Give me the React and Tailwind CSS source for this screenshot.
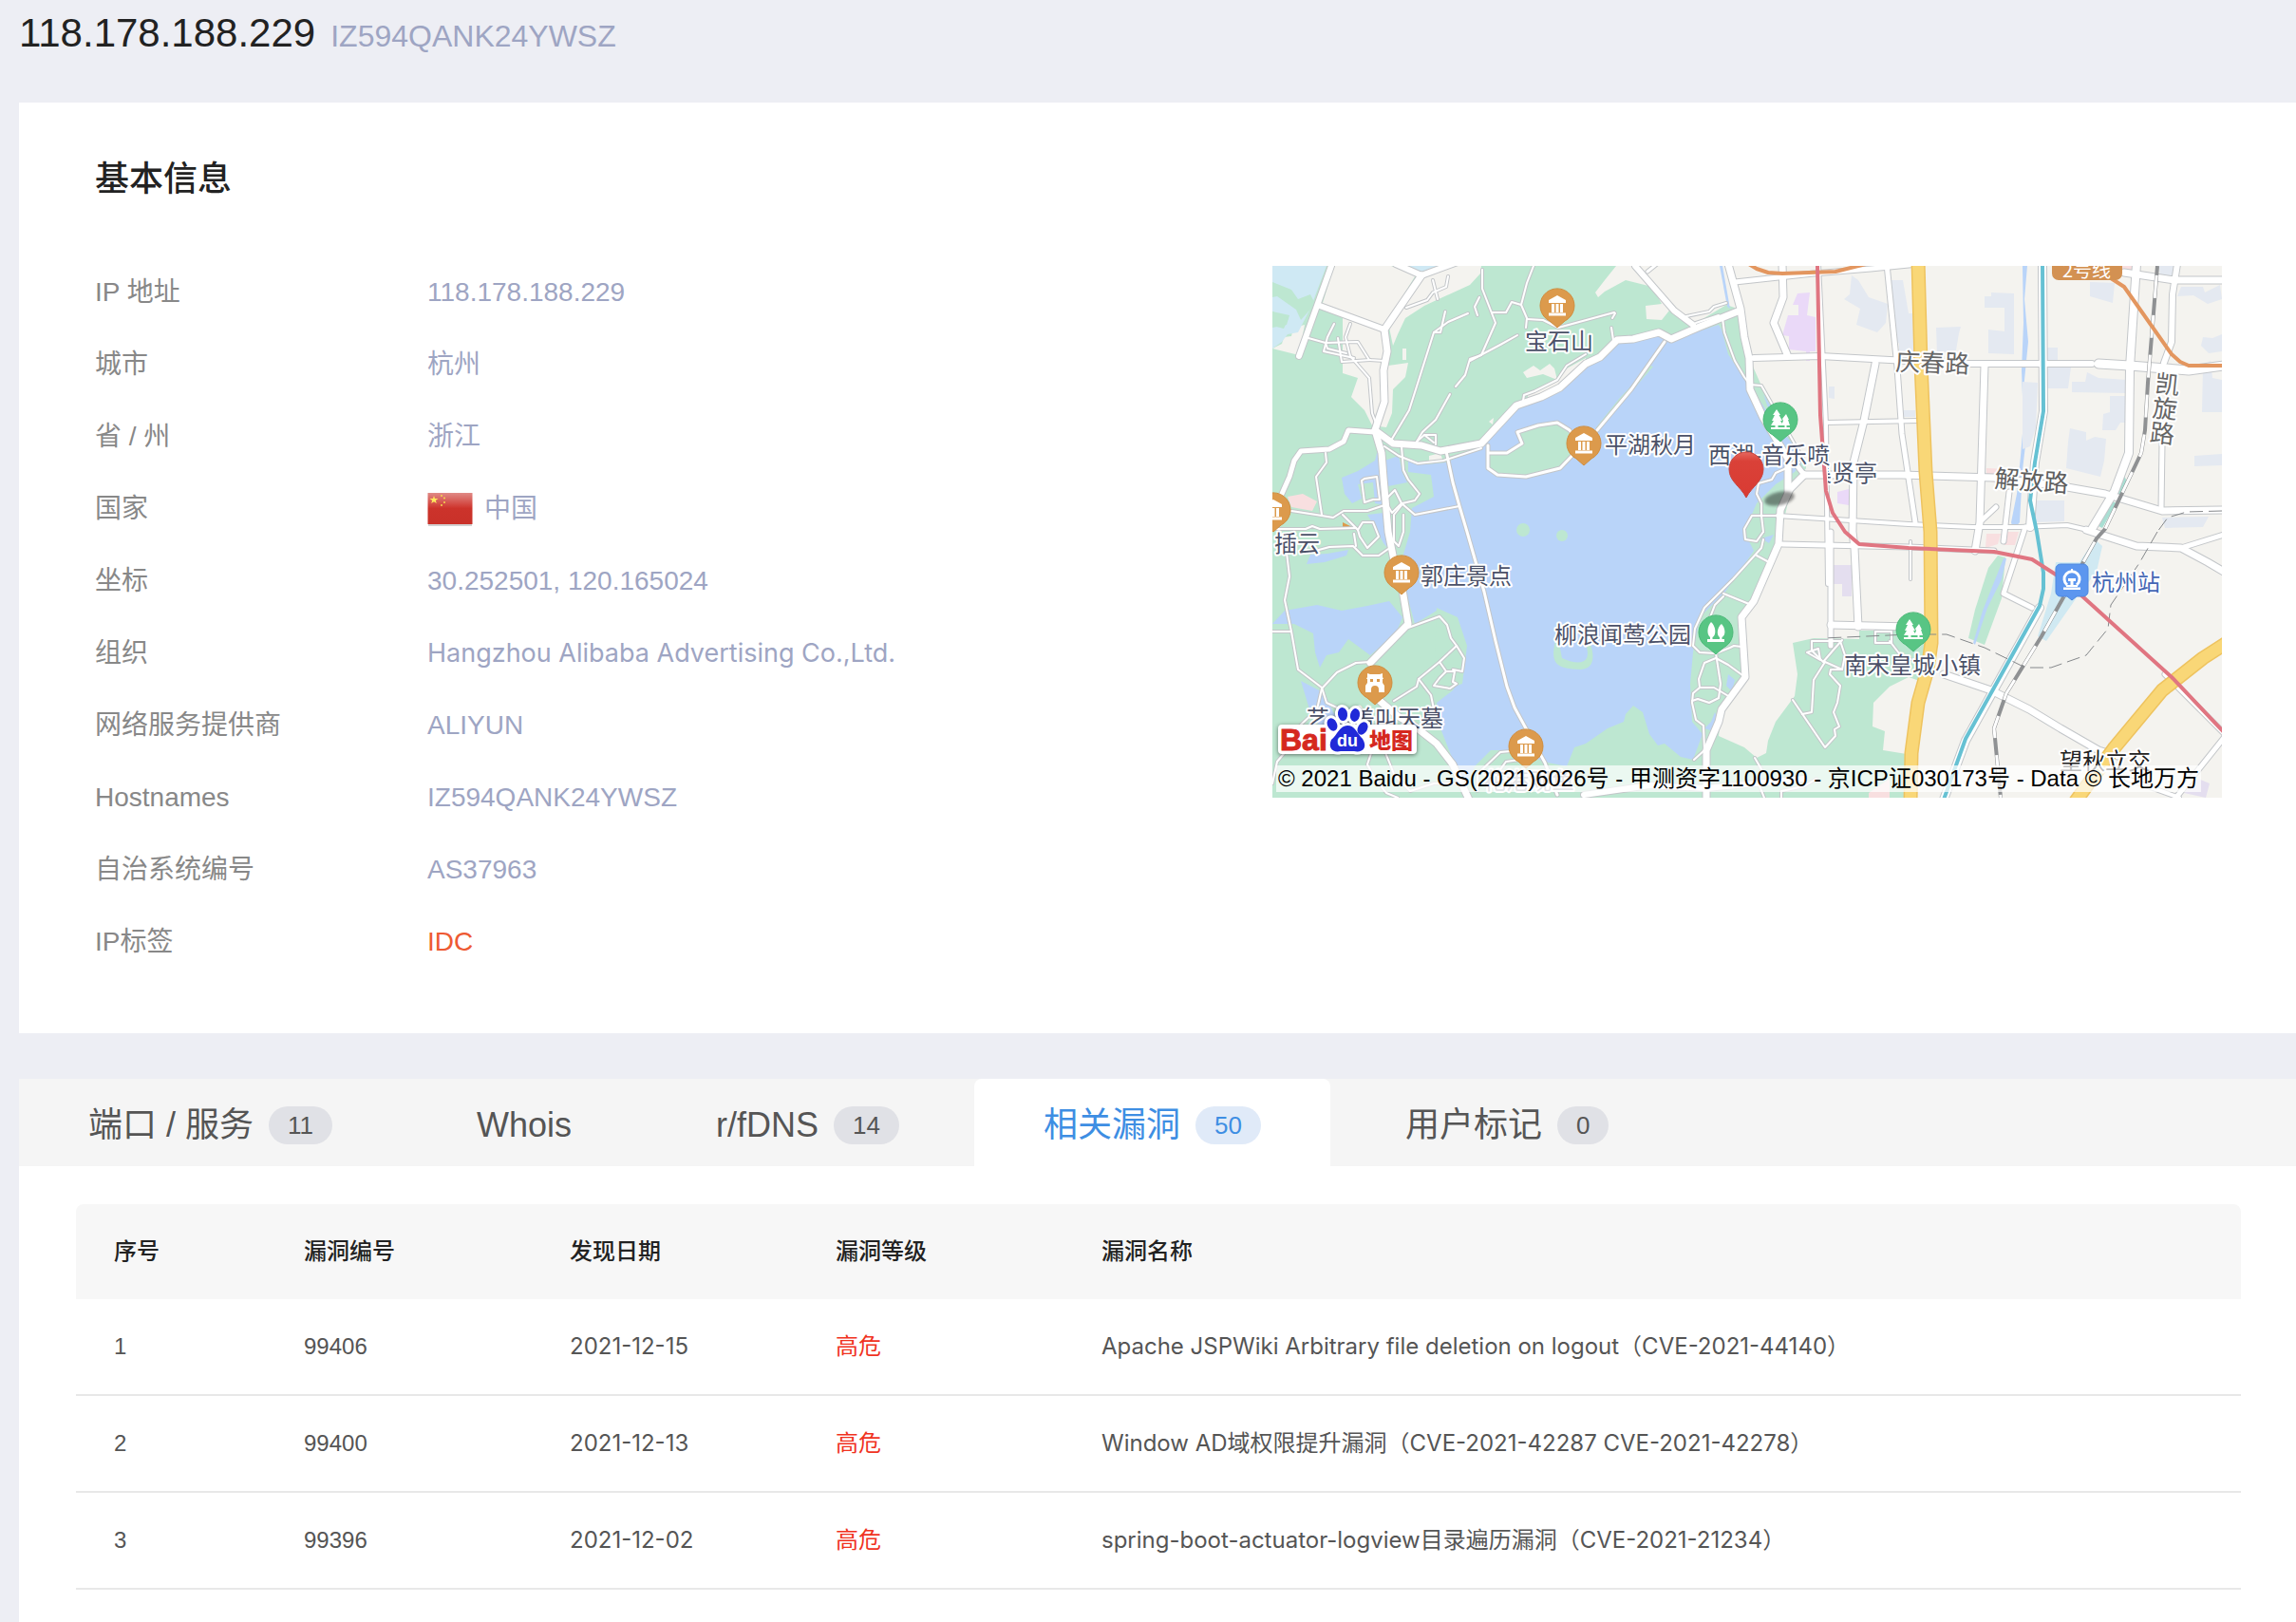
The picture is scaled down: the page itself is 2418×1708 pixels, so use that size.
import React from "react";

const INFO = [
  ["IP 地址", "118.178.188.229"],
  ["城市", "杭州"],
  ["省 / 州", "浙江"],
  ["国家", "中国", "flag"],
  ["坐标", "30.252501, 120.165024"],
  ["组织", "Hangzhou Alibaba Advertising Co.,Ltd.", "name"],
  ["网络服务提供商", "ALIYUN"],
  ["Hostnames", "IZ594QANK24YWSZ"],
  ["自治系统编号", "AS37963"],
  ["IP标签", "IDC", "tag"],
];

const VALUE_STYLE = {
  text: "text-[#9ea5c3]",
  flag: "flex items-center gap-3 text-[#9ea5c3]",
  name: "font-['Inter',sans-serif] text-[27px] text-[#9ea5c3]",
  tag: "text-[#ee5a33]",
};

const TABS = [
  { name: "端口 / 服务", count: 11 },
  { name: "Whois" },
  { name: "r/fDNS", count: 14 },
  { name: "相关漏洞", count: 50, active: true },
  { name: "用户标记", count: 0 },
];

const ROWS = [
  [1, "99406", "2021-12-15", "高危", "Apache JSPWiki Arbitrary file deletion on logout（CVE-2021-44140）"],
  [2, "99400", "2021-12-13", "高危", "Window AD域权限提升漏洞（CVE-2021-42287 CVE-2021-42278）"],
  [3, "99396", "2021-12-02", "高危", "spring-boot-actuator-logview目录遍历漏洞（CVE-2021-21234）"],
];

const CELL_STYLE = [
  "",
  "",
  "font-['Inter',sans-serif]",
  "text-[#f0321e]",
  "font-['Inter','Noto_Sans_CJK_SC',sans-serif]",
];

/* ---- map data: [line width, points] ---- */
const ROADS = [
  // park paths
  [3, "182,48 177,70 170,70 144,152 126,182"],
  [3, "170,70 185,59 206,50"],
  [3, "218,33 213,43 216,52"],
  [3, "221,4 221,24 235,60 220,94 208,98 203,115 193,127"],
  [3, "208,100 240,83 258,73"],
  [3, "187,135 172,162 158,175 152,185"],
  [3, "231,49 246,49 252,38 262,41 268,55 267,65"],
  [3, "262,41 268,18 275,0"],
  [3, "268,56 285,57 301,65 360,49 361,50 358,55"],
  [3, "357,65 359,78"],
  [3, "330,93 310,105 300,120 276,132 265,136 264,142"],
  [3, "141,44 163,36 169,28 183,22 185,11"],
  [3, "169,15 174,35"],
  [3, "38,76 56,81 90,80 102,99 118,100"],
  [3, "65,61 58,75 54,90 86,97"],
  [3, "82,61 77,75 82,95 102,118 105,155 110,168"],
  [3, "69,76 73,101 103,99"],
  [3, "56,81 58,87 78,92"],
  [3, "56,197 57,207 46,222 52,262"],
  [3, "20,258 46,262 64,265 75,258 100,258 118,252"],
  [3, "4,277 35,277 42,274 50,277 88,276"],
  [3, "74,262 90,278"],
  [3, "90,278 95,270 106,270 112,285 100,297 92,285 90,278"],
  [3, "97,224 110,222 113,246 106,246 97,249 94,226 97,224"],
  [3, "120,245 129,236 136,250 126,260 120,250"],
  [3, "136,190 138,215 143,225 155,240 150,247 137,250"],
  [3, "136,250 150,262 197,253"],
  [3, "136,252 128,262 128,290 133,295 138,280 138,262"],
  [3, "118,190 133,200 153,208 180,205 220,192"],
  [3, "152,185 160,178 172,178 172,188"],
  [3, "160,178 170,186"],
  [3, "15,302 18,327 13,352 20,385 27,425 52,444 57,460 72,467"],
  [3, "0,385 20,385"],
  [3, "52,445 68,428 88,418 103,417"],
  [3, "52,445 47,467 28,485"],
  [3, "38,302 60,296 85,295 95,305 112,305 122,298"],
  [3, "86,282 88,295"],
  [3, "143,381 176,369 184,378 188,392 194,400 202,413 200,427 190,425"],
  [3, "194,400 176,417 154,435 152,443 128,458"],
  [3, "154,435 167,452 170,467"],
  [3, "176,417 183,427 192,427 190,438 194,440 187,445 170,442 176,434 183,427"],
  [3, "105,510 100,525 108,540 120,555 132,560"],
  [3, "28,485 15,510 5,522 0,545"],
  [3, "118,510 128,535 145,553 170,545 200,545"],
  [3, "216,553 216,535 240,512 262,510"],
  [3, "226,550 246,522 275,518"],
  [4, "227,189 227,197 247,197 263,187 258,175 280,168 300,165 313,173 325,190 303,213 267,222 237,220 227,213 227,197"],
  [4, "183,195 190,228 197,253 205,280 223,343 235,395 247,443 255,465 267,487 287,523 300,557"],
  [4, "413,80 378,130 342,173"],
  [3, "436,53 460,48 465,43 478,39"],
  [3, "446,60 470,52 474,55 476,70 484,92 487,100 497,117 503,125 515,126 560,205"],
  [3, "555,207 530,218 526,225 512,229 510,240 515,250 515,263 517,280"],
  [3, "532,263 505,263 497,277 498,288 510,290 517,280"],
  [3, "517,288 515,297 485,330 470,345 455,360 445,382 443,400 450,407 467,408 482,402 486,400 494,401"],
  [3, "510,305 523,312"],
  [3, "475,345 502,356"],
  [3, "475,348 466,357 461,370"],
  [3, "467,408 472,440 470,455 460,460 448,456 442,458"],
  [3, "467,413 455,418 449,435 450,444 443,450 442,460 446,478 454,484 455,510 444,520"],
  [3, "467,413 480,420 495,431"],
  [3, "450,444 465,444 482,454"],
  [3, "548,457 582,507 593,495 592,488 597,485 591,470 595,460 598,442 587,430 588,425 600,425"],
  [3, "558,472 568,470 570,436 582,417 600,425 603,410 598,395 568,395 568,405 580,417 592,403 600,394"],
  [3, "563,407 577,415 575,403 563,407"],
  [3, "635,385 635,397 652,397 652,385 635,385"],
  [3, "650,395 660,408 672,414"],
  [3, "508,518 515,530 512,545 518,560"],
  [3, "536,560 536,553 560,548 573,540"],
  // main roads
  [7, "62,0 28,95"],
  [7, "50,42 118,67"],
  [7, "130,-2 157,10 195,-4"],
  [6, "10,240 18,222 23,205 30,195 60,193 75,185 80,173 108,175"],
  [8, "108,173 127,187 157,189 177,195 220,187 257,147 283,138 303,128 330,103 345,96 363,78 380,77 407,70 420,77 450,64 490,48"],
  [8, "157,10 118,67 121,90 117,110 118,143 108,173 115,197 117,223 122,280 128,310"],
  [8, "136,335 143,377 103,418"],
  [8, "113,458 132,474 150,485 173,503 190,525 207,562"],
  [7, "382,0 423,47 443,62"],
  [4, "395,6 405,-2"],
  [8, "480,-2 493,45 497,75 502,97 503,130 517,160 543,203 543,237"],
  [8, "560,220 545,235 535,257 533,293 507,353 494,370 498,433 473,467 470,480 457,510 457,562"],
  [6, "550,207 560,220"],
  [6, "487,17 570,8 630,3 680,-2"],
  [8, "537,-2 538,33 528,60 542,93"],
  [7, "507,97 577,95 650,99 733,103 863,103"],
  [10, "870,103 903,105 965,110 1002,105"],
  [8, "635,103 623,163 612,207 611,280 613,297 617,380"],
  [6, "647,-2 658,107 663,177 677,270"],
  [5, "583,165 680,163"],
  [8, "560,220 663,220 760,223 837,233 877,240 937,258 1002,257"],
  [5, "532,263 670,272 737,275 787,275 837,273 863,279"],
  [6, "537,293 670,296 760,300"],
  [5, "575,-2 583,167 585,335"],
  [6, "588,280 588,400"],
  [8, "588,378 672,380"],
  [8, "750,105 745,270 740,300"],
  [6, "747,268 762,254"],
  [6, "776,238 770,290"],
  [9, "811,-2 812,153 803,207 798,275"],
  [9, "910,-2 903,107 902,197 887,237 863,277"],
  [7, "953,-2 948,30 947,80 939,102"],
  [8, "897,7 950,15 1002,15"],
  [6, "937,187 936,257"],
  [8, "707,430 757,447 797,467 830,487 870,510 890,516"],
  [8, "857,278 910,295 957,297 985,312 1002,322"],
  [6, "957,297 1002,283"],
  [6, "793,275 770,345 800,360"],
  [6, "1002,497 950,562"],
  [5, "900,540 955,560"],
  [9, "808,360 730,500 707,562"],
  [6, "940,430 1002,492"],
  [7, "328,557 397,547 457,550 560,540"],
  [3, "672,290 672,330"],
];

const BLOCKS = [
  "610,10 617,15 628,33 648,40 646,60 637,70 615,62 619,45 602,35 608,30",
  "652,15 664,15 670,50 670,90 652,75",
  "586,127 592,127 592,140 586,139",
  "660,50 678,50 678,90 670,95 660,90",
  "757,28 781,29 781,93 754,92 754,67 771,69 771,44 750,44 750,32 757,32",
  "699,65 725,64 723,71 720,89 700,93",
  "816,86 827,86 827,99 816,99",
  "861,17 887,18 885,39 861,32",
  "815,107 841,107 838,129 815,129",
  "842,122 856,122 858,112 870,118 900,120 900,134 842,133",
  "882,137 900,137 900,165 893,165 888,173 874,173 875,156 882,154",
  "840,171 857,175 857,184 866,180 878,182 876,205 872,222 836,213 838,185",
  "790,122 806,123 804,170 798,190 790,193",
  "804,247 834,247 834,269 804,270",
  "957,22 980,22 982,28 998,20 1000,35 985,40 970,31 953,32",
  "980,75 990,76 1000,72 1000,90 986,92 978,84",
  "980,105 988,100 990,118 1000,120 1000,154 979,154",
  "971,200 1000,198 1000,210 971,211",
  "937,265 986,264 980,275 940,276",
  "933,0 950,0 950,12 935,9",
  "660,152 677,152 677,159 660,159",
];

function Museum({ x, y }) {
  return (
    <g transform={`translate(${x} ${y})`}>
      <path d="M-8 16 L0 23 L8 16 A18 18 0 1 0 -8 16Z" fill="#dc9a4c" stroke="#d08d3e" strokeWidth="1" />
      <path d="M0 -11 L9 -6 V-3 H-9 V-6Z M-6 -2h3v9h-3z M-1.5 -2h3v9h-3z M3 -2h3v9h-3z M-9 7.500h18v3h-18z" fill="#fff" />
    </g>
  );
}

function GreenPin({ x, y, round }) {
  return (
    <g transform={`translate(${x} ${y})`}>
      <path d="M-8 16 L0 23 L8 16 A18 18 0 1 0 -8 16Z" fill="#58c584" stroke="#4cb878" strokeWidth="1" />
      {round ? (
        <path d="M-5 -11 C0 -7 1 3 -3.500 5 V7 H4 V5 C0 2 2 -6 6 -9 C10 -5 11 3 6.500 5 V7 H9 V10 H-9 V7 H-6 V5 C-10 2 -9 -7 -5 -11Z" fill="#fff" />
      ) : (
        <path d="M-4 -11 L0 -5 H-1.500 L2 1 H0 L3 6 H-2.500 V8 H4.500 V6 H1 L3 1 L2 -1 L6 -6 L9 0 H8 L10 6 H6.500 V8 H10 V10 H-10 V8 H-5.500 V6 H-10 L-7 1 H-9 L-6 -5 H-8Z" fill="#fff" />
      )}
    </g>
  );
}

function Label({ x, y, fill = "#4b5168", size = 24, children, ...rest }) {
  return (
    <text x={x} y={y} fill={fill} fontSize={size} stroke="#fff" strokeWidth="4" strokeLinejoin="round" paintOrder="stroke" {...rest}>
      {children}
    </text>
  );
}

function BaiduLogo() {
  const toes = [
    [63, 483, -25],
    [74, 472, -8],
    [87, 473, 12],
    [95, 487, 28],
  ];
  return (
    <g>
      <g fill="#fff" stroke="#fff" strokeWidth="6" style={{ filter: "drop-shadow(0 1px 2px rgb(0 0 0 / 0.5))" }}>
        <rect x="9" y="486" width="140" height="25" rx="1" />
        {toes.map(([cx, cy, r]) => (
          <ellipse key={cx} cx={cx} cy={cy} rx="5" ry="7" transform={`rotate(${r} ${cx} ${cy})`} />
        ))}
        <path d="M79 484 C87 484 89 492 95 498 C101 508 94 513 86 511 H72 C64 513 58 508 62 499 C69 493 71 484 79 484Z" />
      </g>
      <text x="8" y="510" fontSize="32" fontWeight="700" fill="#d5281f" stroke="#d5281f" strokeWidth="1" className="font-['Liberation_Sans',sans-serif]">
        Bai
      </text>
      <g fill="#2029d8">
        {toes.map(([cx, cy, r]) => (
          <ellipse key={cx} cx={cx} cy={cy} rx="5" ry="7" transform={`rotate(${r} ${cx} ${cy})`} />
        ))}
        <path d="M79 484 C87 484 89 492 95 498 C101 508 94 513 86 511 H72 C64 513 58 508 62 499 C69 493 71 484 79 484Z" />
      </g>
      <text x="68" y="506" fontSize="18" fontWeight="700" fill="#fff" className="font-['Liberation_Sans',sans-serif]">
        du
      </text>
      <text x="102" y="508" fontSize="23" fontWeight="900" fill="#d5281f">
        地图
      </text>
    </g>
  );
}

function CityMap() {
  return (
    <svg
      viewBox="0 0 1000 560"
      role="img"
      aria-label="地图"
      className="block h-auto w-full font-['Noto_Sans_CJK_SC',sans-serif]"
    >
      <defs>
        <clipPath id="east-of-metro">
          <rect x="585" y="200" width="60" height="40" />
        </clipPath>
        <linearGradient id="pin-red" x1="0" y1="0" x2="0" y2="1">
          <stop offset="0" stopColor="#e5675f" />
          <stop offset="0.2" stopColor="#da4138" />
          <stop offset="1" stopColor="#d93b33" />
        </linearGradient>
        <filter id="soft">
          <feGaussianBlur stdDeviation="1.5" />
        </filter>
      </defs>

      <rect width="1000" height="560" fill="#f4f3ef" />

      {/* parks */}
      <g fill="#bde7d1">
        <path d="M0 0H362L350 15 340 28 343 33 350 27 372 15 400 22 410 40 393 42 394 56 410 57 418 47 443 62 478 41 490 45 502 97 515 126 562 205 562 213 545 240 533 293 507 353 494 370 498 433 473 467 470 495 497 507 510 518 520 513 522 500 530 480 550 453 553 430 548 397 570 392 618 393V384H690V440L670 433 650 443 633 460 632 485 645 490 643 510 668 514V560H0Z" />
        <path d="M764 305 772 307 768 350 750 399 733 392 740 362 754 318Z" />
      </g>
      <g fill="#a9dfd3">
        <path d="M897 221 900 227 891 243 885 241Z" />
        <path d="M885 248 889 250 874 276 870 274Z" />
      </g>
      <g fill="#f4f3ef">
        <path d="M65 0H125L152 8 117 65 52 42Z" />
        <path d="M152 14 192 0H220L219 8 208 20 175 35 160 42 140 55 132 72 127 84 122 60Z" />
        <path d="M74 53 117 70 122 105 143 102 140 117 127 130 126 155 120 170 105 168 97 152 83 138 90 118 74 113Z" />
        <path d="M0 87 10 82 12 75 20 74 22 65 34 62 28 94Z" />
        <path d="M264 112 275 105 282 110 292 103 297 108 300 120 285 114 268 118Z" />
        <path d="M268 135 300 120 310 108 330 97V103L303 128 270 140Z" />
        <path d="M137 87H141V99H137Z M228 164 233 160 232 167Z M165 200 177 197 180 207H165Z" />
      </g>
      <g fill="#cfe9f4">
        <path d="M0 0H57L40 45 27 70 16 72 10 80 0 87V65L15 62 18 52 0 48Z" />
        <path d="M127 0H190L157 10Z" />
      </g>
      <g fill="#bde7d1">
        <path d="M0 17 20 25 27 35 40 30 45 40 30 57 25 46 5 32 0 33Z" />
        <path d="M0 48 17 55 12 66 0 63Z" />
      </g>

      {/* lake and ponds */}
      <g fill="#b9d4f9">
        <path d="M220 187 257 147 303 130 330 103 363 78 410 72 423 77 470 62 473 67 480 93 500 123 517 147 547 197 557 208 550 217 530 230 510 250 497 280 507 300 477 343 450 370 443 407 440 440 442 480 453 493 443 520 430 517 413 503 406 505 397 493 390 470 380 463 372 472 370 480 353 487 330 503 318 507 310 527 290 523 250 510 230 510 213 527 203 547 190 520 177 487 173 460 190 447 202 427 200 393 187 377 173 363 150 377 140 340 137 307 145 280 147 255 170 243 167 220 143 217 143 203 163 209 183 207 220 190Z" />
        <path d="M0 377 13 363 47 357 73 363 100 358 123 353 137 370 130 387 103 410 80 393 70 407 57 410 50 423 45 407 43 387 23 377Z" />
        <path d="M73 223 90 216 108 205 112 190 118 205 133 200 137 218 142 228 122 232 118 252 108 250 106 228 90 230 94 245 84 250 76 240Z" />
        <path d="M100 262 117 260 120 278 124 300 117 292 108 275Z" />
        <path d="M40 304 58 303 80 299 78 305 55 312 36 314Z" />
        <path d="M30 437 55 450 64 470 80 485 72 470 100 482 110 500 60 500 40 470Z" />
        <path d="M471 0H474L482 45 479 43Z" />
        <path d="M790 0H795L792 35 796 80 791 130 794 180 790 215 787 270 780 278 778 270 784 240 788 200 791 165 789 110 791 60Z" />
        <path d="M770 308 773 308 768 330 753 360 740 399 738 397 748 363Z" />
        <path d="M480 430 487 436 484 448 478 442Z M466 470 470 480 464 490 455 487 462 480Z M515 287 528 283 523 292Z" />
        <path d="M517 135 525 148 538 175 550 190 548 200 530 172Z" />
      </g>
      <g fill="#bde7d1">
        <path d="M227 197 247 197 263 187 258 175 280 168 300 165 313 173 325 190 303 213 267 222 237 220 227 213Z" />
        <circle cx="264" cy="278" r="7" />
        <circle cx="305" cy="284" r="6" />
        <path d="M398 105 401 106 370 142 358 155 345 170 341 170 365 140Z" />
        <path d="M298 395 C292 420 300 424 325 425 C342 424 338 405 334 396 L330 398 C337 418 325 422 305 413 L302 398Z" />
        <path d="M173 360 195 370 205 400 200 440 185 445 170 440Z" />
      </g>

      {/* city blocks */}
      <g fill="#e4e9f1">
        {BLOCKS.map((p) => (
          <polygon key={p} points={p} />
        ))}
      </g>
      <g fill="#ead9f8">
        <path d="M553 29 566 28 563 52 572 54V90H566V100H562V90L544 88 544 74 537 73 543 52H554V41H548Z" />
        <path d="M595 238 607 235V252L595 250Z" />
      </g>
      <path d="M590 315H610V348H600V335H590Z M975 540 987 545 983 560 960 555Z" fill="#e4deef" />
      <path d="M752 213 777 214 779 222 768 230 752 226Z M752 282 767 282 764 293 751 297Z M895 0H906V4H895Z M773 280 786 280 782 294H771Z M628 555 650 540V560H628Z M16 243 32 240 47 248 42 258 20 254Z" fill="#f8dfe0" />
      <path d="M866 288 874 295 868 322 850 345 815 395 806 390 820 345 825 312 850 312Z" fill="#d0e9f2" />
      <path d="M74 270 84 275 84 276 74 276Z" fill="#dc9a4c" />

      {/* roads */}
      <g fill="none" strokeLinejoin="round" strokeLinecap="round">
        {ROADS.map(([w, p], i) => (
          <polyline key={i} points={p} strokeWidth={w + 1} stroke="#c3c6c9" />
        ))}
        {ROADS.map(([w, p], i) => (
          <polyline key={i} points={p} strokeWidth={w - 1} stroke="#fff" />
        ))}
        {[
          "680,-5 683,103 688,217 693,280 694,397 690,425 680,460 673,513 672,565",
          "1005,397 980,413 937,447 887,507 845,565",
        ].map((p) => (
          <g key={p}>
            <polyline points={p} stroke="#eec35f" strokeWidth="15" />
            <polyline points={p} stroke="#f9d777" strokeWidth="12" />
          </g>
        ))}
        <g strokeLinecap="butt">
          <polyline points="932,0 922,123 919,173 915,197 877,277 868,287 810,390 773,450 760,487 767,560" stroke="#8f9193" strokeWidth="4" />
          <polyline points="932,0 922,123 919,173 915,197 877,277 868,287 810,390 773,450 760,487 767,560" stroke="#fff" strokeWidth="3" strokeDasharray="24 18" strokeDashoffset="-10" />
          <polyline points="932,280 913,313 883,357 880,382 857,410 820,423 793,423 750,402 710,388 672,388 580,392" stroke="#85888b" strokeWidth="1" strokeDasharray="14 6" />
          <polyline points="1000,258 963,259 943,265 932,280" stroke="#85888b" strokeWidth="1" strokeDasharray="14 6" />
        </g>
        <polyline points="811,-2 812,153 803,207 798,247 805,280 812,323 812,340 808,358 730,498 707,562" stroke="#66c1d3" strokeWidth="4" />
        <polyline points="500,-3 510,3 522,7 537,8 593,6 625,-2" stroke="#e3965f" strokeWidth="4" />
        <polyline points="883,13 897,22 947,93 956,101 965,105 1002,105" stroke="#e3965f" strokeWidth="4" />
      </g>

      <Label x="565" y="227" clipPath="url(#east-of-metro)">集贤亭</Label>
      <polyline points="574,-2 577,157 583,237 590,260 603,280 618,293 670,297 760,301 800,309 825,325 852,347 947,433 1002,491" fill="none" stroke="#e07581" strokeWidth="4" strokeLinejoin="round" />

      <rect x="821" y="-20" width="74" height="35" rx="7" fill="#d39152" />
      <text x="832" y="12" fontSize="20" fill="#fff">2号线</text>

      {/* place labels */}
      <Label x="656" y="110" size={26} fill="#666" transform="rotate(2 656 110)">庆春路</Label>
      <Label x="760" y="233" size={26} fill="#5f5f5f" transform="rotate(4 760 233)">解放路</Label>
      <g transform="rotate(6 940 150)">
        <Label x="927" y="134" size={26} fill="#666">凯</Label>
        <Label x="927" y="160" size={26} fill="#666">旋</Label>
        <Label x="927" y="186" size={26} fill="#666">路</Label>
      </g>
      <Label x="266" y="88">宝石山</Label>
      <Label x="350" y="197">平湖秋月</Label>
      <Label x="459" y="208">西湖-音乐喷</Label>
      <Label x="2" y="301">插云</Label>
      <Label x="156" y="335">郭庄景点</Label>
      <Label x="297" y="397">柳浪闻莺公园</Label>
      <Label x="602" y="429">南宋皇城小镇</Label>
      <Label x="863" y="342" fill="#4467b5">杭州站</Label>
      <Label x="829" y="530" fill="#222">望秋立交</Label>
      <Label x="36" y="485">艺人盖叫天墓</Label>
      <Label x="222" y="551" fill="#a0a4ae">花港观鱼</Label>

      {/* pins */}
      <Museum x={300} y={42} />
      <Museum x={328} y={187} />
      <Museum x={1} y={257} />
      <Museum x={136} y={323} />
      <Museum x={267} y={506} />
      <g transform="translate(108 439)">
        <path d="M-8 16 L0 23 L8 16 A18 18 0 1 0 -8 16Z" fill="#dc9a4c" stroke="#d08d3e" strokeWidth="1" />
        <path
          fillRule="evenodd"
          d="M-8 -10 L-5 -9 H5 L8 -10 V-6 L9 -4 H8 V0 L10 3 V10 H4 V7 A4 4 0 0 0 -4 7 V10 H-10 V3 L-8 0 V-4 H-9 L-8 -6Z M-5 -4V-1H-2V-4Z M2 -4V-1H5V-4Z"
          fill="#fff"
        />
      </g>
      <GreenPin x={535} y={162} />
      <GreenPin x={467} y={386} round />
      <GreenPin x={675} y={383} />
      <g transform="translate(842 331)">
        <path d="M-12 -17H12A5 5 0 0 1 17 -12V12A5 5 0 0 1 12 17H5L0 21 -5 17H-12A5 5 0 0 1 -17 12V-12A5 5 0 0 1 -12 -17Z" fill="#5c96ef" stroke="#4c87e0" strokeWidth="1" />
        <path d="M-5 5 A8 8 0 1 1 5 5" fill="none" stroke="#fff" strokeWidth="3" />
        <path d="M-1 -12H1V-9H-1Z M-4 -2H4V1H1.500V5H6V7H-6V5H-1.500V1H-4Z M-9 7.500H9V10H-9Z" fill="#fff" />
      </g>

      {/* selected position */}
      <ellipse cx="534" cy="245" rx="16" ry="7" fill="#000" opacity="0.42" filter="url(#soft)" transform="rotate(-12 534 245)" />
      <path d="M499 244 C493 232 481 227 481 214 A18 18 0 0 1 517 214 C517 227 505 232 499 244Z" fill="url(#pin-red)" stroke="#c9453d" strokeWidth="1" />

      <BaiduLogo />

      <rect x="4" y="526" width="974" height="28" fill="#fff" opacity="0.7" />
      <text x="6" y="548" fontSize="24" fill="#000" className="font-['Liberation_Sans','Noto_Sans_CJK_SC',sans-serif]">
        © 2021 Baidu - GS(2021)6026号 - 甲测资字1100930 - 京ICP证030173号 - Data © 长地万方
      </text>
    </svg>
  );
}

function ChinaFlag() {
  return (
    <svg viewBox="0 0 48 36" className="h-9 w-12 shrink-0" aria-hidden="true">
      <defs>
        <linearGradient id="flag-sheen" x1="0" y1="0" x2="0" y2="1">
          <stop offset="0" stopColor="#e08a86" />
          <stop offset="0.45" stopColor="#d03a33" />
          <stop offset="0.5" stopColor="#cc332b" />
          <stop offset="1" stopColor="#c93129" />
        </linearGradient>
      </defs>
      <rect x="1" y="34" width="46" height="2" fill="#000" opacity="0.18" />
      <rect x="0.500" y="1" width="47" height="33" fill="url(#flag-sheen)" />
      <path d="M7 4 8 7H11.500L8.800 9 9.800 12 7 10.200 4.200 12 5.200 9 2.500 7H6Z" fill="#ffe95c" />
      <g fill="#f5d94f">
        <circle cx="15" cy="4" r="1" />
        <circle cx="18" cy="6.500" r="1" />
        <circle cx="18" cy="11" r="1" />
        <circle cx="15" cy="14" r="1" />
      </g>
    </svg>
  );
}

export default function App() {
  return (
    <div className="flex min-h-screen flex-col bg-[#edeef4] pl-5 font-['Liberation_Sans','Noto_Sans_CJK_SC',sans-serif] text-[#555]">
      <header className="flex h-[108px] items-baseline gap-4 pt-2.5">
        <h1 className="text-[42px] leading-[50px] text-[#222]">118.178.188.229</h1>
        <span className="text-[32px] leading-[50px] font-medium text-[#9ea5c3]">IZ594QANK24YWSZ</span>
      </header>

      <section className="bg-white pt-14 pr-[78px] pb-[58px] pl-20">
        <h2 className="text-[36px] leading-[50px] font-medium text-[#222]">基本信息</h2>
        <div className="mt-14 flex items-start justify-between gap-10">
          <dl className="grid min-w-0 grid-cols-[350px_1fr] text-[28px] leading-[76px]">
            {INFO.map(([k, v, kind = "text"]) => (
              <React.Fragment key={k}>
                <dt className="text-[#888]">{k}</dt>
                <dd className={VALUE_STYLE[kind]}>
                  {kind === "flag" && <ChinaFlag />}
                  {v}
                </dd>
              </React.Fragment>
            ))}
          </dl>
          <div className="mt-2.5 w-[1000px] min-w-0 shrink">
            <CityMap />
          </div>
        </div>
      </section>

      <section className="mt-12 grow bg-white">
        <div role="tablist" className="flex h-[92px] gap-1.5 bg-[#f5f5f5]">
          {TABS.map((t) => (
            <button
              key={t.name}
              type="button"
              role="tab"
              aria-selected={!!t.active}
              className={
                t.active
                  ? "flex items-center gap-4 rounded-t-lg bg-white px-[73px] pt-1.5 text-[36px] text-[#3e8ee3]"
                  : "flex items-center gap-4 px-[73px] pt-1.5 text-[36px]"
              }
            >
              {t.name}
              {t.count !== undefined && (
                <span
                  className={
                    t.active
                      ? "flex h-10 items-center rounded-full bg-[#e0eaf8] px-5 text-[26px]"
                      : "flex h-10 items-center rounded-full bg-[#e0e1e6] px-5 text-[26px]"
                  }
                >
                  {t.count}
                </span>
              )}
            </button>
          ))}
        </div>

        <div className="pt-10 pr-[58px] pl-[60px]">
          <table className="w-full table-fixed border-separate border-spacing-0 text-left text-[24px]">
            <colgroup>
              <col className="w-[200px]" />
              <col className="w-[280px]" />
              <col className="w-[280px]" />
              <col className="w-[280px]" />
              <col />
            </colgroup>
            <thead>
              <tr className="text-[#222]">
                {["序号", "漏洞编号", "发现日期", "漏洞等级", "漏洞名称"].map((h) => (
                  <th key={h} scope="col" className="h-[100px] bg-[#f7f7f7] pl-10 font-medium first:rounded-tl-lg last:rounded-tr-lg">
                    {h}
                  </th>
                ))}
              </tr>
            </thead>
            <tbody>
              {ROWS.map((r) => (
                <tr key={r[0]}>
                  {r.map((c, i) => (
                    <td key={i} className="h-[102px] border-b-2 border-[#e8e8e8] pl-10">
                      <span className={CELL_STYLE[i]}>{c}</span>
                    </td>
                  ))}
                </tr>
              ))}
            </tbody>
          </table>
        </div>
      </section>
    </div>
  );
}
